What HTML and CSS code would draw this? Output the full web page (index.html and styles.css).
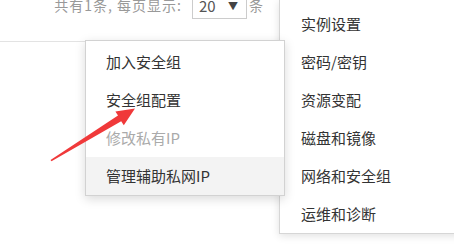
FILE: index.html
```html
<!DOCTYPE html>
<html lang="zh-CN">
<head>
<meta charset="utf-8">
<link rel="stylesheet" href="styles.css">
</head>
<body>
<div class="page">
  <div class="toolbar">
    <span class="total">共有1条, 每页显示:</span>
    <span class="select"><span class="val">20</span><span class="caret">▼</span></span>
    <span class="unit">条</span>
  </div>
  <div class="table-line"></div>

  <ul class="menu main-menu">
    <li>实例设置</li>
    <li>密码/密钥</li>
    <li>资源变配</li>
    <li>磁盘和镜像</li>
    <li>网络和安全组</li>
    <li>运维和诊断</li>
  </ul>

  <ul class="menu sub-menu">
    <li>加入安全组</li>
    <li>安全组配置</li>
    <li class="disabled">修改私有IP</li>
    <li class="hover">管理辅助私网IP</li>
  </ul>

  <svg class="arrow" width="454" height="248" viewBox="0 0 454 248">
    <polygon points="50.5,160 118,115.4 115.4,111.5 135,108.5 123.8,125.3 121.2,121.2 51.5,161.2" fill="#f0393a"/>
  </svg>
</div>
</body>
</html>
```
FILE: styles.css
```css
* { box-sizing: border-box; }
html, body { margin: 0; padding: 0; background: #fff; }
body { font-family: "Noto Sans CJK SC", "Noto Sans", sans-serif; }
.page {
  position: relative;
  width: 454px;
  height: 248px;
  overflow: hidden;
  background: #fff;
}
.toolbar {
  display: flex;
  align-items: center;
  justify-content: flex-end;
  height: 28px;
  margin-top: -9px;
  padding-right: 191px;
  color: #999;
  font-size: 14px;
}
.total { margin-right: 10px; letter-spacing: 1px; }
.select {
  display: flex;
  align-items: center;
  justify-content: space-between;
  width: 55px;
  height: 28px;
  border: 1px solid #ccc;
  padding: 0 8px 0 6px;
  color: #555;
  font-size: 15px;
}
.caret { font-size: 10px; color: #444; }
.unit { margin-left: 2px; }
.table-line {
  margin-top: 22px;
  height: 1px;
  background: #e3e3e3;
}
.menu {
  list-style: none;
  margin: 0;
  position: absolute;
  background: #fff;
  font-size: 15px;
  color: #333;
}
.menu li {
  height: 38px;
  line-height: 38px;
  white-space: nowrap;
}
.main-menu {
  left: 279px;
  top: 0;
  width: 190px;
  padding: 5px 0 0 21px;
  border: 1px solid #d6d6d6;
  border-top: none;
  box-shadow: 0 2px 8px rgba(0,0,0,0.12);
}
.sub-menu {
  left: 85px;
  top: 40px;
  width: 200px;
  padding: 2px 0 0 0;
  border: 1px solid #d2d2d2;
  box-shadow: 0 3px 10px rgba(0,0,0,0.15);
}
.sub-menu li { padding-left: 20px; }
.sub-menu li.disabled { color: #aaa; }
.sub-menu li.hover { background: #f3f3f3; }
.arrow {
  position: absolute;
  left: 0;
  top: 0;
}
```
